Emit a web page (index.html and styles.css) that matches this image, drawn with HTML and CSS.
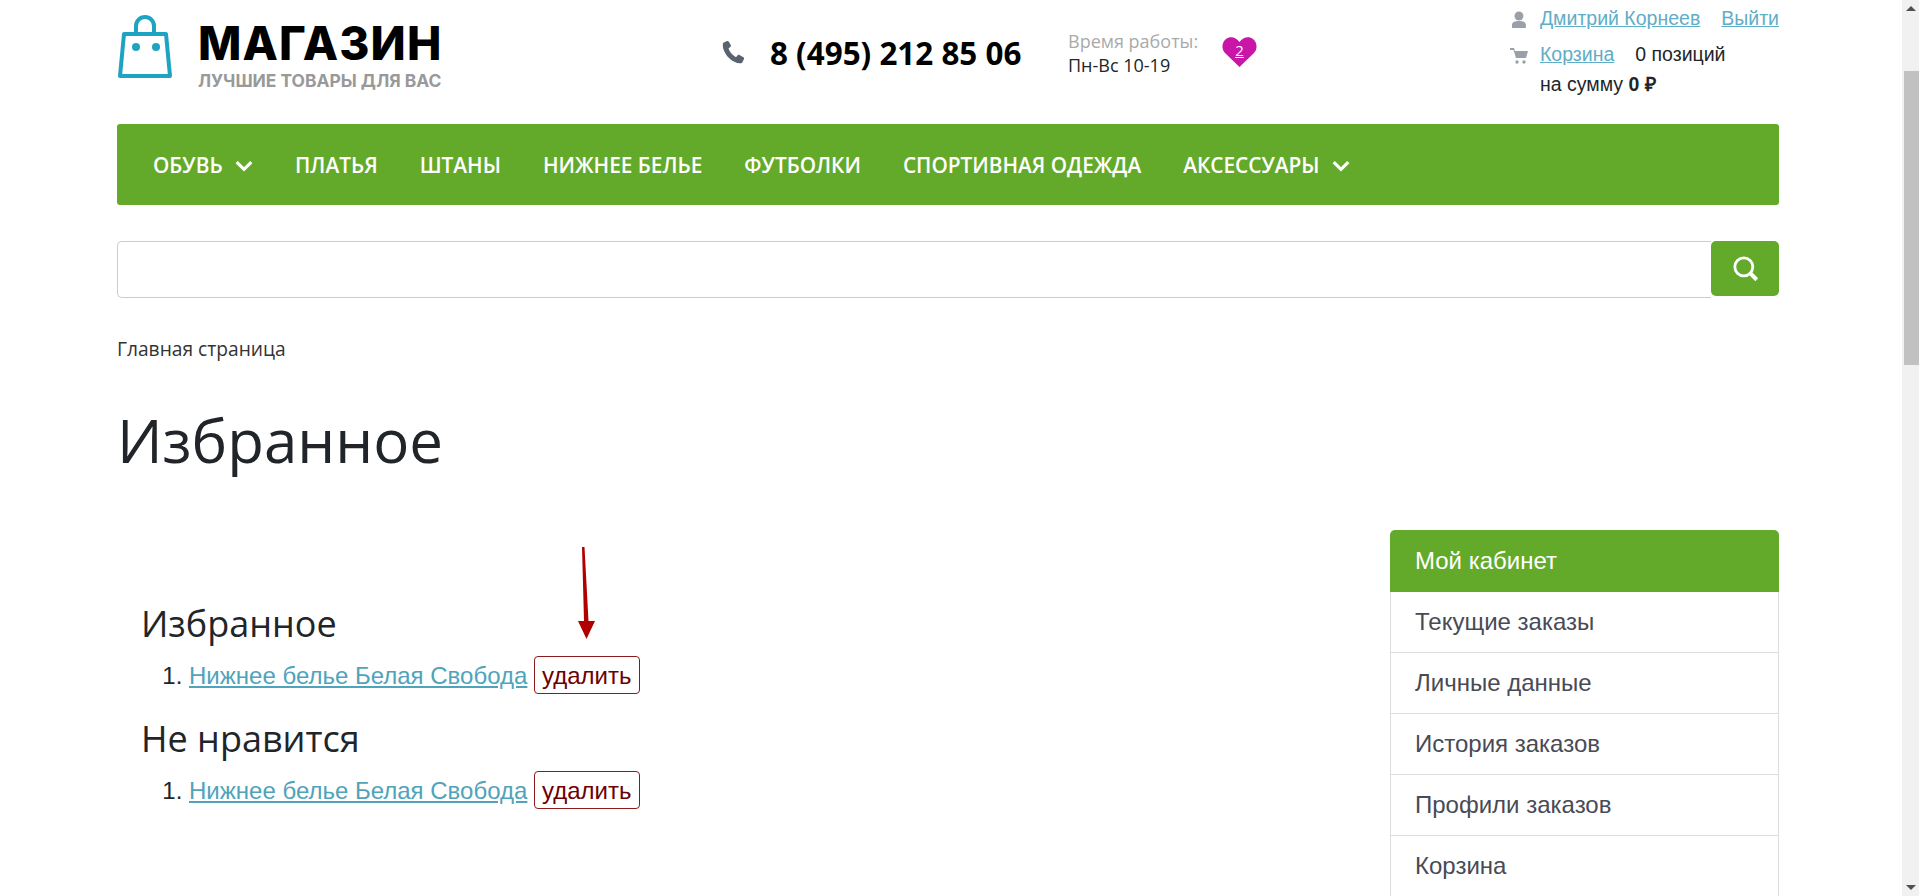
FILE: index.html
```html
<!DOCTYPE html>
<html lang="ru">
<head>
    <meta charset="UTF-8">
    <title>Избранное</title>
    <link rel="stylesheet" href="styles.css">
</head>
<body>
    <div class="page">
        <header class="header">
            <a class="logo" href="#">
                <svg class="logo-bag" width="56" height="66" viewBox="0 0 56 66">
                    <path d="M19 19V12a9 9 0 0 1 18 0v7" fill="none" stroke="#1fa3c2" stroke-width="4" stroke-linecap="round"/>
                    <path d="M7 20H49L53 62H3Z" fill="none" stroke="#1fa3c2" stroke-width="4" stroke-linejoin="round"/>
                    <circle cx="19" cy="33" r="4" fill="#1fa3c2"/>
                    <circle cx="39" cy="33" r="4" fill="#1fa3c2"/>
                </svg>
                <div class="logo-text">
                    <div class="logo-name">МАГАЗИН</div>
                    <div class="logo-slogan">ЛУЧШИЕ ТОВАРЫ ДЛЯ ВАС</div>
                </div>
            </a>
            <div class="phone">
                <svg width="24" height="24" viewBox="0 0 24 24">
                    <path d="M6 1 2 3C1 8 4 14 8 18c4 4 9 6 13 5l2-4c.3-.7 0-1.300-.6-1.700l-4-2.300c-.6-.3-1.200-.2-1.700.3l-1.700 1.900C12.500 16 8.500 12 7.500 8.500l2-1.700c.5-.4.6-1 .4-1.600L7.700 1.500C7.400 1 6.700.7 6 1Z" fill="#5a6270"/>
                </svg>
                <span class="phone-number">8 (495) 212 85 06</span>
            </div>
            <div class="hours">
                <div class="hours-label">Время работы:</div>
                <div>Пн-Вс 10-19</div>
            </div>
            <a class="heart" href="#">
                <svg width="35" height="30" viewBox="0 0 35 30">
                    <path d="M17.500 30 3 16C-1 12 0 5 4 2c4-3 10-2 13.500 3C21 0 27-1 31 2c4 3 5 10 1 14Z" fill="#c915a8"/>
                </svg>
                <span class="heart-count">2</span>
            </a>
            <div class="user-box">
                <div class="user-row">
                    <svg class="user-icon" width="18" height="18" viewBox="0 0 18 18">
                        <circle cx="9" cy="5" r="4.500" fill="#9aa0aa"/>
                        <path d="M2 17v-3c0-3 3-4 7-4s7 1 7 4v3Z" fill="#9aa0aa"/>
                    </svg>
                    <a href="#">Дмитрий Корнеев</a>
                    <a class="logout" href="#">Выйти</a>
                </div>
                <div class="user-row">
                    <svg class="user-icon" width="18" height="18" viewBox="0 0 18 18">
                        <path d="M0 1H4L5 4H18L16 11H6L3.500 3H0Z" fill="#9aa0aa"/>
                        <circle cx="7" cy="15" r="1.700" fill="#9aa0aa"/>
                        <circle cx="14" cy="15" r="1.700" fill="#9aa0aa"/>
                    </svg>
                    <a href="#">Корзина</a>
                    <span class="positions">0 позиций</span>
                </div>
                <div class="user-sum">на сумму <b>0 ₽</b></div>
            </div>
        </header>

        <nav class="menu">
            <a href="#">ОБУВЬ <svg class="chevron" width="18" height="12" viewBox="0 0 16 10"><path d="M1.500 1.500 8 8 14.500 1.500" fill="none" stroke="#fff" stroke-width="2.800"/></svg></a>
            <a href="#">ПЛАТЬЯ</a>
            <a href="#">ШТАНЫ</a>
            <a href="#">НИЖНЕЕ БЕЛЬЕ</a>
            <a href="#">ФУТБОЛКИ</a>
            <a href="#">СПОРТИВНАЯ ОДЕЖДА</a>
            <a href="#">АКСЕССУАРЫ <svg class="chevron" width="18" height="12" viewBox="0 0 16 10"><path d="M1.500 1.500 8 8 14.500 1.500" fill="none" stroke="#fff" stroke-width="2.800"/></svg></a>
        </nav>

        <form class="search">
            <input type="text" class="search-input">
            <button type="button" class="search-btn">
                <svg width="27" height="27" viewBox="0 0 24 24">
                    <circle cx="10.500" cy="10.500" r="8" fill="none" stroke="#fff" stroke-width="2.500"/>
                    <path d="M16 16 22 22" stroke="#fff" stroke-width="3.500"/>
                </svg>
            </button>
        </form>

        <div class="breadcrumb">Главная страница</div>
        <h1>Избранное</h1>

        <div class="content">
            <main class="favorites">
                <h2>Избранное</h2>
                <ol>
                    <li><a href="#">Нижнее белье Белая Свобода</a> <span class="remove">удалить</span></li>
                </ol>
                <h2>Не нравится</h2>
                <ol>
                    <li><a href="#">Нижнее белье Белая Свобода</a> <span class="remove">удалить</span></li>
                </ol>
                <svg class="arrow" width="20" height="92" viewBox="0 0 20 92">
                    <path d="M6 0H8.500L12.500 74H19L10.500 92 2 74H8Z" fill="#b00000"/>
                </svg>
            </main>
            <aside class="sidebar">
                <div class="sidebar-title">Мой кабинет</div>
                <a href="#">Текущие заказы</a>
                <a href="#">Личные данные</a>
                <a href="#">История заказов</a>
                <a href="#">Профили заказов</a>
                <a href="#">Корзина</a>
            </aside>
        </div>
    </div>

    <div class="scrollbar">
        <div class="scroll-up"></div>
        <div class="scroll-track"><div class="scroll-thumb"></div></div>
        <div class="scroll-down"></div>
    </div>
</body>
</html>
```

FILE: styles.css
```css
html, body {
    margin: 0;
    height: 896px;
    overflow: hidden;
}

body {
    display: flex;
    font-family: "Liberation Sans", Arial, sans-serif;
    color: #212529;
    background: #fff;
}

.page {
    flex: 1;
    padding: 0 123px 0 117px;
    min-width: 0;
}

/* Header */
.header {
    display: flex;
    height: 124px;
}

.logo {
    display: flex;
    width: 602px;
    padding-top: 14px;
    color: #000;
    text-decoration: none;
}

.logo-bag {
    margin-right: 25px;
}

.logo-name {
    font-family: Inter, sans-serif;
    font-weight: 800;
    font-size: 46px;
    line-height: 46px;
    margin-top: 6px;
    letter-spacing: 1.1px;
}

.logo-slogan {
    font-family: Inter, sans-serif;
    font-weight: 700;
    font-size: 17.4px;
    line-height: 18px;
    color: #999;
    margin-top: 6px;
}

.phone {
    display: flex;
    align-items: center;
    gap: 25px;
    width: 347px;
    height: 104px;
    padding-left: 2px;
}

.phone-number {
    font-family: "Open Sans", sans-serif;
    font-weight: 700;
    font-size: 31.4px;
    color: #000;
}

.hours {
    width: 154px;
    padding-top: 29px;
    font-family: "Open Sans", sans-serif;
    font-size: 18px;
    line-height: 24px;
}

.hours-label {
    color: #aaa;
}

.heart {
    position: relative;
    width: 35px;
    height: 30px;
    margin-top: 37px;
}

.heart-count {
    position: absolute;
    left: 0;
    right: 0;
    top: 3px;
    text-align: center;
    font-family: "Open Sans", sans-serif;
    font-size: 15px;
    color: #fff;
    text-decoration: underline;
}

.user-box {
    margin-left: auto;
    width: 268px;
    font-size: 19.5px;
    padding-top: 8px;
    white-space: nowrap;
}

.user-row {
    display: flex;
    align-items: center;
    height: 21px;
    margin-bottom: 15px;
}

.user-icon {
    width: 18px;
    margin-right: 12px;
    margin-left: -1px;
    margin-top: 3px;
}

.user-box a {
    color: #5fadc6;
}

.logout {
    margin-left: 21px;
}

.positions {
    margin-left: 21px;
}

.user-sum {
    padding-left: 29px;
    margin-top: -10px;
}

/* Menu */
.menu {
    display: flex;
    align-items: center;
    gap: 42px;
    height: 81px;
    padding: 0 36px;
    background: #64aa2a;
    border-radius: 3px;
}

.menu a {
    font-family: "Open Sans", sans-serif;
    font-weight: 600;
    font-size: 20.8px;
    color: #fff;
    text-decoration: none;
    white-space: nowrap;
}

.chevron {
    margin-left: 7px;
    vertical-align: 1px;
}

/* Search */
.search {
    display: flex;
    margin-top: 36px;
}

.search-input {
    flex: 1;
    height: 57px;
    box-sizing: border-box;
    border: 1px solid #ccc;
    border-radius: 5px 0 0 5px;
    border-right: none;
    outline: none;
}

.search-btn {
    display: flex;
    align-items: center;
    justify-content: center;
    width: 68px;
    height: 55px;
    border: none;
    padding: 0;
    background: #64aa2a;
    border-radius: 5px;
}

/* Title */
.breadcrumb {
    font-family: "Open Sans", sans-serif;
    font-size: 19.2px;
    line-height: 24px;
    margin-top: 39px;
    color: #333;
}

h1 {
    font-family: "Open Sans", sans-serif;
    font-weight: 400;
    font-size: 60px;
    line-height: 72px;
    margin: 43px 0 0;
}

/* Content */
.content {
    display: flex;
    justify-content: space-between;
    margin-top: 54px;
}

.favorites {
    position: relative;
    padding: 71px 0 0 24px;
    flex: 1;
}

h2 {
    font-family: "Open Sans", sans-serif;
    font-weight: 400;
    font-size: 36px;
    line-height: 46px;
    margin: 0 0 9px;
}

ol {
    margin: 0 0 21px;
    padding-left: 48px;
    font-size: 24px;
    line-height: 38px;
}

.favorites a {
    color: #4fa3ba;
}

.remove {
    display: inline-block;
    box-sizing: border-box;
    height: 38px;
    padding: 0 7px;
    line-height: 37px;
    border: 1px solid #8b1a1a;
    border-radius: 4px;
    color: #6d0000;
}

.arrow {
    position: absolute;
    left: 459px;
    top: 17px;
}

.sidebar {
    width: 389px;
}

.sidebar-title {
    height: 62px;
    line-height: 62px;
    padding-left: 25px;
    font-size: 24px;
    color: #fff;
    background: #64aa2a;
    border-radius: 5px 5px 0 0;
}

.sidebar a {
    display: block;
    height: 61px;
    box-sizing: border-box;
    line-height: 60px;
    padding-left: 24px;
    font-size: 24px;
    color: #484a55;
    text-decoration: none;
    border: 1px solid #ddd;
    border-top: none;
}

/* Scrollbar */
.scrollbar {
    width: 17px;
    height: 896px;
    background: #f1f1f1;
    display: flex;
    flex-direction: column;
    flex-shrink: 0;
}

.scroll-up,
.scroll-down {
    height: 17px;
    display: flex;
    align-items: center;
    justify-content: center;
}

.scroll-up::after,
.scroll-down::after {
    content: "";
    border-left: 5px solid transparent;
    border-right: 5px solid transparent;
}

.scroll-up::after {
    border-bottom: 5px solid #505050;
}

.scroll-down::after {
    border-top: 5px solid #505050;
}

.scroll-track {
    flex: 1;
    padding: 54px 0 0 2px;
}

.scroll-thumb {
    width: 15px;
    height: 294px;
    background: #c1c1c1;
}
```
